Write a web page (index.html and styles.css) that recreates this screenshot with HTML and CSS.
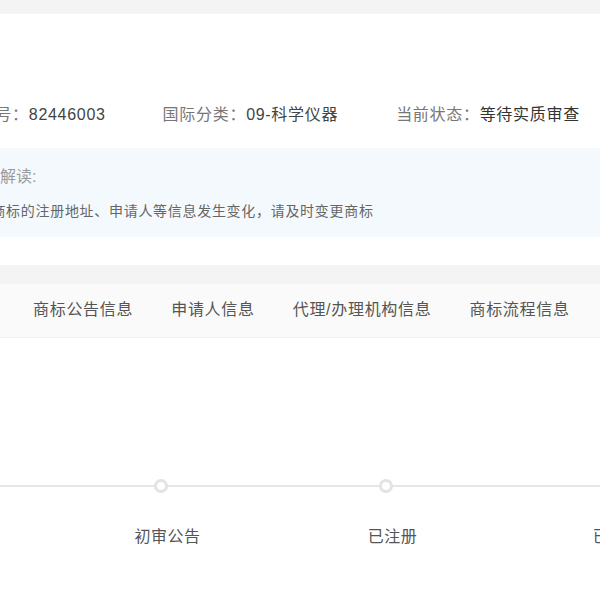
FILE: index.html
```html
<!DOCTYPE html>
<html lang="zh-CN">
<head>
<meta charset="utf-8">
<title>商标详情</title>
<link rel="stylesheet" href="styles.css">
</head>
<body>
<div class="band-top"></div>
<section class="card">
  <div class="card-inner">
    <div class="info-row">
      <div class="info-item"><span class="label">申请号：</span><span class="value">82446003</span></div>
      <div class="info-item"><span class="label">国际分类：</span><span class="value">09-科学仪器</span></div>
      <div class="info-item"><span class="label">当前状态：</span><span class="value strong">等待实质审查</span></div>
    </div>
    <div class="notice">
      <div class="notice-title">状态解读:</div>
      <div class="notice-text">如果商标的注册地址、申请人等信息发生变化，请及时变更商标</div>
    </div>
  </div>
</section>
<div class="band-mid"></div>
<nav class="tabs">
  <div class="tabs-inner">
    <span class="tab">商标公告信息</span>
    <span class="tab">申请人信息</span>
    <span class="tab">代理/办理机构信息</span>
    <span class="tab">商标流程信息</span>
  </div>
</nav>
<section class="timeline">
  <div class="steps">
    <div class="step"><span class="dot"></span><span class="step-label">申请收文</span></div>
    <div class="step"><span class="dot"></span><span class="step-label">初审公告</span></div>
    <div class="step"><span class="dot"></span><span class="step-label">已注册</span></div>
    <div class="step"><span class="dot"></span><span class="step-label">已续展</span></div>
  </div>
</section>
</body>
</html>
```
FILE: styles.css
```css
html, body {
  margin: 0;
  padding: 0;
  background: #ffffff;
  font-family: "Liberation Sans", "Noto Sans CJK SC", sans-serif;
  overflow: hidden;
}

.band-top {
  height: 14px;
  background: #f4f4f4;
}

.card {
  background: #ffffff;
  padding: 89px 0 28px;
}

.card-inner {
  margin-left: -34px;
}

.info-row {
  display: flex;
  gap: 57px;
  margin-left: -4px;
  font-size: 16px;
  line-height: 24px;
  letter-spacing: 0.7px;
  white-space: nowrap;
}

.info-item:nth-child(3) {
  margin-left: 1px;
}

.label {
  color: #777777;
}

.value {
  color: #444444;
}

.value.strong {
  color: #333333;
}

.notice {
  margin-top: 21px;
  background: #f4f9fd;
  padding: 17px 0 15px;
  margin-right: -40px;
}

.notice-title {
  font-size: 16px;
  line-height: 24px;
  color: #9a9a9a;
  padding-left: 2px;
}

.notice-text {
  margin-top: 11px;
  margin-left: -4px;
  font-size: 14px;
  line-height: 22px;
  letter-spacing: 0.7px;
  color: #666666;
  white-space: nowrap;
}

.band-mid {
  height: 19px;
  background: #f4f4f4;
}

.tabs {
  background: #fafafa;
  height: 54px;
  border-bottom: 1px solid #f0f0f0;
  box-sizing: border-box;
}

.tabs-inner {
  display: flex;
  gap: 38px;
  padding-left: 33px;
  font-size: 16px;
  line-height: 52px;
  letter-spacing: 0.7px;
  color: #555555;
  white-space: nowrap;
}

.timeline {
  padding-top: 141px;
}

.steps {
  display: flex;
  margin-left: -170px;
  position: relative;
}

.steps::before {
  content: "";
  position: absolute;
  left: 0;
  right: -400px;
  top: 6px;
  height: 2px;
  background: #e6e6e6;
}

.step {
  flex: 0 0 225px;
  display: flex;
  flex-direction: column;
  align-items: center;
}

.dot {
  position: relative;
  width: 14px;
  height: 14px;
  box-sizing: border-box;
  border: 3px solid #e3e3e3;
  border-radius: 50%;
  background: #ffffff;
  margin-right: 14px;
}

.step-label {
  margin-top: 32px;
  font-size: 16px;
  line-height: 24px;
  letter-spacing: 0.5px;
  color: #555555;
  white-space: nowrap;
}
```
